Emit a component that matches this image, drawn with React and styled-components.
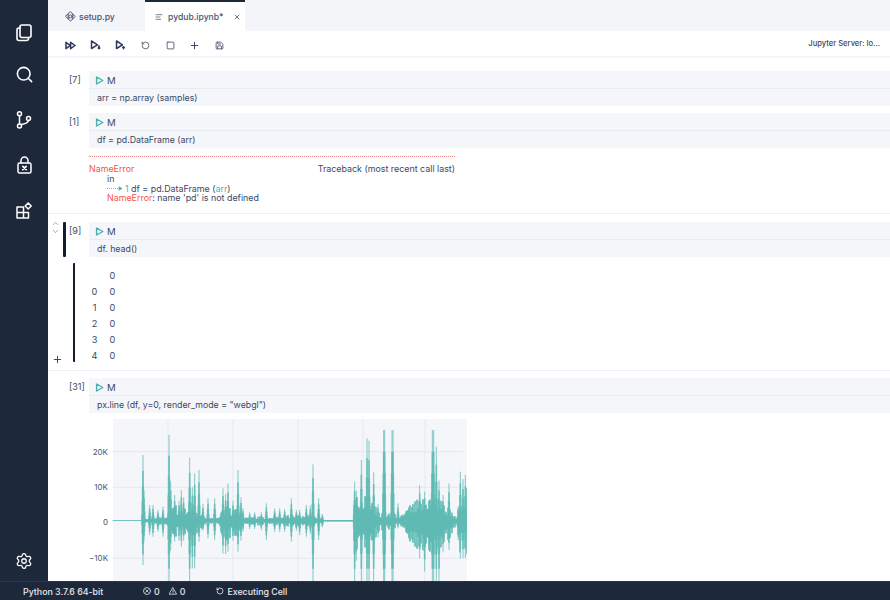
import React from "react";
import styled, { createGlobalStyle } from "styled-components";
import { Search, ChevronUp, ChevronDown, Plus, X, RotateCcw, Square, Save, Settings, AlignLeft } from "lucide-react";

const Global = createGlobalStyle`
  html, body { margin: 0; height: 100%; overflow: hidden; }
  #root { height: 100%; }
  * { box-sizing: border-box; }
`;
const Shell = styled.div`
  width: 890px; height: 600px; display: grid;
  grid-template-columns: 48px 1fr; grid-template-rows: 581px 19px;
  font-family: Inter, "Liberation Sans", sans-serif; font-size: 9px; color: #3d4763; background: #fff;
`;
const Side = styled.nav`
  background: #1e283b; display: flex; flex-direction: column; align-items: center;
  padding: 22px 0 10px; gap: 24px; color: #fff;
`;
const SideIcon = styled.span`
  height: 21px; display: flex; align-items: center; justify-content: center;
  margin-top: ${p => p.$bottom ? "auto" : `${p.$mt || 0}px`};
`;
const Main = styled.main`display: flex; flex-direction: column; overflow: hidden; min-width: 0;`;
const Tabs = styled.div`height: 31px; flex: none; background: #f3f5f9; display: flex;`;
const Tab = styled.div`
  width: ${p => p.$w}px; display: flex; align-items: center; gap: ${p => p.$gap}px; padding-left: ${p => p.$pad}px;
  padding-top: ${p => p.$active ? 0 : 2}px;
  background: ${p => p.$active ? "#fff" : "transparent"};
  border-top: ${p => p.$active ? "2px solid #1e283b" : "0"};
  color: #4a5470; font-weight: 500; font-size: 8.6px; white-space: nowrap;
  svg { flex: none; }
`;
const TabClose = styled.span`margin-left: 4px; display: flex; color: #3d4763;`;
const Tools = styled.div`height: 27px; flex: none; display: flex; padding-bottom: 2px; background: #f4f6fa;`;
const ToolInner = styled.div`
  flex: 1; height: 25px; padding: 3px 0 0 10px; background: #fff; display: flex; align-items: center;
`;
const Tool = styled.span`width: 24.9px; display: flex; justify-content: center; color: #2f3a58;`;
const Server = styled.span`margin: -3px 10px 0 auto; font-size: 7.6px; color: #3c4562; font-weight: 500;`;
const Book = styled.div`padding-top: 13px; display: flex; flex-direction: column;`;
const Row = styled.div`display: flex; margin-top: ${p => p.$mt || 0}px;`;
const Gutter = styled.div`width: 41px; flex: none; position: relative; padding: 1px 0 0 21px; height: 35px; font-size: 9px; line-height: 15px;`;
const Chev = styled.div`position: absolute; left: 3px; top: -3px; display: flex; flex-direction: column; color: #5f6880;`;
const ActiveBar = styled.div`position: absolute; left: 15px; top: 0; width: 2.5px; height: 35px; background: #141d2e; border-radius: 1px;`;
const Cell = styled.div`flex: 1; background: #f4f6fa; height: 35px; display: flex; flex-direction: column;`;
const CellHead = styled.div`height: 18px; flex: none; display: flex; align-items: center; gap: 3px; padding: 1px 0 0 6px; border-bottom: 1px solid #e8ebf1; font-size: 9.6px;`;
const Code = styled.div`flex: 1; padding-left: 8px; display: flex; align-items: center; font-size: 8.8px;`;
const ErrorBox = styled.div`
  margin-left: 41px; width: 366px; padding-top: 8px; height: 65px; font-size: 8.9px; line-height: 9.6px;
`;
const Dashed = styled.div`border-top: 1px dotted #f08a84; height: 8px;`;
const ErrHead = styled.div`display: flex; justify-content: space-between; line-height: 10px;`;
const ErrLine = styled.div`padding-left: 18px; display: flex; align-items: center; white-space: pre;`;
const Red = styled.span`color: #f4544c;`;
const Teal = styled.span`color: #4fb3ad;`;
const Sep = styled.div`height: 1px; background: #eceef3; margin-top: ${p => p.$mt}px;`;
const Output = styled.div`position: relative; height: 99px; margin: 6px 0 0 24.5px; border-left: 2.5px solid #141d2e; border-radius: 1px;`;
const Grid = styled.div`
  display: grid; grid-template-columns: 18px 18px; grid-auto-rows: 16.1px; padding: 5px 0 0 11px; font-size: 9.2px; line-height: 16px; text-align: center; width: 70px;
`;
const AddBtn = styled.span`position: absolute; left: -23px; bottom: -3px; display: flex; color: #2f3a58;`;
const Chart = styled.svg`display: block; margin-left: 41px; margin-top: 6px; flex: none;`;
const Status = styled.footer`
  grid-column: 1 / 3; background: #1e283b; color: #e6e9f0; display: flex; align-items: center; font-weight: 500; font-size: 8.8px; padding-left: 23px; border-top: 1px solid #2b3549;
`;
const StatusPy = styled.span`width: 120px;`;
const StatusItem = styled.span`display: inline-flex; align-items: center; gap: 3px; margin-right: ${p => p.$mr}px;`;

const stroke = { fill: "none", stroke: "currentColor", strokeLinecap: "round", strokeLinejoin: "round" };

const Files = () => (
  <svg width="16" height="18" viewBox="0 0 16 18" {...stroke} strokeWidth="1.6">
    <rect x="4" y="1" width="11" height="12.5" rx="2" />
    <path d="M4 4H3a2 2 0 0 0-2 2v8.5a2 2 0 0 0 2 2h7.5a2 2 0 0 0 2-2v-1" />
  </svg>
);
const Branch = () => (
  <svg width="16" height="18" viewBox="0 0 16 18" {...stroke} strokeWidth="1.5">
    <circle cx="3.5" cy="2.8" r="2" /><circle cx="3.5" cy="15" r="2" /><circle cx="12.5" cy="7.5" r="2" />
    <path d="M3.5 5v8M5.3 13.6C9 13 12 12 12.5 9.6" />
  </svg>
);
const LockX = () => (
  <svg width="15" height="18" viewBox="0 0 15 18" {...stroke} strokeWidth="1.5">
    <rect x="1" y="7" width="13" height="10" rx="1.6" />
    <path d="M4 7V4.5a3.5 3.5 0 0 1 7 0V7" />
    <path d="M5.8 10.3l3.4 3.4M9.2 10.3l-3.4 3.4" strokeWidth="1.7" />
  </svg>
);
const Extensions = () => (
  <svg width="16" height="17" viewBox="0 0 16 17" {...stroke} strokeWidth="1.5">
    <path d="M1 5h6.5v11H1zM1 10.5h11.5V16H7.5" />
    <path d="M12.2 1l3 3-3 3-3-3z" />
  </svg>
);
const PlayMark = ({ c = "#47b1ab", s = 9 }) => (
  <svg width={s} height={s} viewBox="0 0 9 9" fill="none" stroke={c} strokeWidth="1.4" strokeLinejoin="round"><path d="M1.6 1v7L7.8 4.5z" /></svg>
);
const RunAll = () => (
  <svg width="11" height="9" viewBox="0 0 11 9" {...stroke} strokeWidth="1.5"><path d="M1 1.3v6.4L5.3 4.5zM5.6 1.3v6.4L10 4.5z" /></svg>
);
const RunDown = ({ flip }) => (
  <svg width="11" height="10" viewBox="0 0 11 10" {...stroke} strokeWidth="1.5">
    <path d="M1.5 1v7.5L7.5 4.8z" />
    <path d={flip ? "M8.5 8.8v-2M7.7 7.5l.8-.8.8.8" : "M9 5.8v3M8.2 8l.8.8.8-.8"} />
  </svg>
);
const PySymbol = () => (
  <svg width="11" height="11" viewBox="0 0 11 11" {...stroke} strokeWidth="1">
    <path d="M5.5.8L10.2 5.5 5.5 10.2.8 5.5z" /><circle cx="5.5" cy="5.5" r="1.6" /><path d="M3.2 3.2v4.6M7.8 3.2v4.6" />
  </svg>
);
const Arrow = () => (
  <svg width="17" height="5" viewBox="0 0 17 5" fill="none" stroke="#4fb3ad" strokeWidth=".8" style={{ marginRight: 1 }}>
    <path d="M0 2.5h14" strokeDasharray="1 1" /><path d="M12 .8l3 1.7-3 1.7z" fill="#4fb3ad" />
  </svg>
);
const CircleX = () => (
  <svg width="8" height="8" viewBox="0 0 8 8" {...stroke} strokeWidth=".8"><circle cx="4" cy="4" r="3.5" /><path d="M2.7 2.7l2.6 2.6M5.3 2.7L2.7 5.3" /></svg>
);
const Warn = () => (
  <svg width="8" height="8" viewBox="0 0 8 8" {...stroke} strokeWidth=".8"><path d="M4 .8L7.6 7.2H.4z" /><path d="M4 3v2M4 6v.1" /></svg>
);

// thin peaks: [x, up, down] in units of 1/3 px
const spikes = [
  [190,197,133],[193,90,60],[210,47,43],[220,47,48],[235,32,33],[250,42,48],
  [268,257,190],[273,120,90],[285,77,63],[298,60,60],[305,92,78],[312,70,60],[330,189,190],[338,100,143],[345,142,143],
  [358,152,63],[370,50,30],[385,67,53],[405,67,58],[430,97,98],[438,80,100],[445,112,93],[460,60,60],[475,152,93],[484,70,60],[490,37,33],
  [510,25,25],[525,25,25],[545,25,28],[560,52,58],[585,37,33],[600,37,33],[615,35,33],[635,67,63],[650,32,30],[660,32,43],[680,47,48],[692,45,40],[700,169,190],[717,67,58],[728,20,20],
  [825,117,190],[830,90,120],[845,182,190],[862,247,190],[868,240,190],[882,145,190],[895,50,50],[912,272,190],[915,272,190],[937,272,190],[940,272,190],[955,52,23],
  [1020,107,113],[1035,87,153],[1058,272,190],[1062,272,190],[1070,222,190],[1078,120,190],[1090,77,93],[1108,112,88],[1142,147,113],[1150,125,113],[1157,137,113],
];
// broad body of the sound between the peaks: [x, up, down]
const body = [
  [100,1,1],[196,1,1],[200,8,8],[260,14,18],[275,48,50],[310,38,38],[340,28,48],[380,10,10],[415,8,8],[430,42,62],[470,32,42],[495,11,11],[520,10,12],[700,18,18],[725,7,7],[738,2,2],[820,2,2],
  [822,80,100],[860,75,80],[900,22,30],[950,18,20],[960,7,7],[975,32,36],[990,46,62],[1020,60,80],[1050,85,125],[1080,68,90],[1110,32,50],[1130,8,12],[1140,68,90],[1162,88,90],
];
const bodyAt = (zx, key) => {
  for (let i = 1; i < body.length; i++) {
    if (zx <= body[i][0]) {
      const a = body[i - 1], b = body[i];
      return a[key] + (b[key] - a[key]) * (zx - a[0]) / (b[0] - a[0]);
    }
  }
  return 1;
};
const rand = n => {
  const v = Math.sin(n * 12.9898) * 43758.5453;
  return v - Math.floor(v);
};
const envelope = (zx, key) => {
  let best = bodyAt(zx, key);
  if (best > 2) best *= 0.4 + 0.75 * rand(Math.floor(zx / 3)) ** 2;
  for (const s of spikes) {
    const d = Math.abs(zx - s[0]);
    const v = s[key] * Math.max(0, 1 - d / 4.5) ** 1.1;
    if (v > best) best = v;
  }
  return best;
};
const wave = (() => {
  let d = "";
  for (let zx = 100; zx <= 1162; zx += 1) {
    const x = ((zx - 100) / 3).toFixed(2);
    const hi = envelope(zx, 1) / 3;
    const lo = envelope(zx, 2) / 3;
    d += `M${x} ${(101.7 - hi).toFixed(2)}V${(101.7 + lo).toFixed(2)}`;
  }
  return d;
})();

const Plot = () => (
  <Chart width="378" height="175" viewBox="-24 0 378 175">
    <rect x="0" y="0" width="354" height="175" fill="#f4f6fa" />
    <g stroke="#e6e9ef" strokeWidth="1">
      {[55, 120, 185, 250, 312].map(x => <line key={x} x1={x} x2={x} y1="0" y2="175" />)}
      {[32.7, 68.3, 139.3].map(y => <line key={y} x1="0" x2="350" y1={y} y2={y} />)}
    </g>
    <path d={wave} stroke="#5cb8b2" strokeWidth=".75" fill="none" />
    <g fontFamily="Inter, 'Liberation Sans', sans-serif" fontSize="8" fill="#4a5470" textAnchor="end">
      <text x="-5" y="35.5">20K</text>
      <text x="-5" y="71">10K</text>
      <text x="-5" y="106">0</text>
      <text x="-5" y="142">−10K</text>
    </g>
  </Chart>
);

const NbCell = ({ n, code, active, mt }) => (
  <Row $mt={mt}>
    <Gutter>
      {active && <Chev><ChevronUp size={9} strokeWidth={1.5} /><ChevronDown size={9} strokeWidth={1.5} style={{ marginTop: -1 }} /></Chev>}
      {active && <ActiveBar />}
      [{n}]
    </Gutter>
    <Cell>
      <CellHead><PlayMark /> M</CellHead>
      <Code>{code}</Code>
    </Cell>
  </Row>
);

export default function App() {
  return (
    <Shell>
      <Global />
      <Side>
        <SideIcon><Files /></SideIcon>
        <SideIcon $mt={-3}><Search size={19} strokeWidth={2} /></SideIcon>
        <SideIcon><Branch /></SideIcon>
        <SideIcon><LockX /></SideIcon>
        <SideIcon $mt={1}><Extensions /></SideIcon>
        <SideIcon $bottom><Settings size={18} strokeWidth={1.7} /></SideIcon>
      </Side>
      <Main>
        <Tabs>
          <Tab $w={97} $pad={17} $gap={3}><PySymbol />setup.py</Tab>
          <Tab $active $w={100} $pad={10} $gap={5}>
            <AlignLeft size={8} strokeWidth={2.2} />pydub.ipynb*
            <TabClose><X size={8} strokeWidth={2.2} /></TabClose>
          </Tab>
        </Tabs>
        <Tools>
          <ToolInner>
            <Tool><RunAll /></Tool>
            <Tool><RunDown /></Tool>
            <Tool><RunDown flip /></Tool>
            <Tool><RotateCcw size={9} strokeWidth={1.9} /></Tool>
            <Tool><Square size={9} strokeWidth={2} /></Tool>
            <Tool><Plus size={11} strokeWidth={2} /></Tool>
            <Tool><Save size={9} strokeWidth={2} /></Tool>
            <Server>Jupyter Server: lo...</Server>
          </ToolInner>
        </Tools>
        <Book>
          <NbCell n="7" code="arr = np.array (samples)" />
          <NbCell n="1" code="df = pd.DataFrame (arr)" mt={7} />
          <ErrorBox>
            <Dashed />
            <ErrHead><Red>NameError</Red><span>Traceback (most recent call last)</span></ErrHead>
            <ErrLine>in</ErrLine>
            <ErrLine><Arrow /><Teal>1</Teal> df = pd.DataFrame (<Teal>arr</Teal>)</ErrLine>
            <ErrLine><Red>NameError</Red>: name 'pd' is not defined</ErrLine>
          </ErrorBox>
          <Sep $mt={0} />
          <NbCell n="9" code="df. head()" active mt={8} />
          <Output>
            <Grid>
              <span /><span>0</span>
              <span>0</span><span>0</span>
              <span>1</span><span>0</span>
              <span>2</span><span>0</span>
              <span>3</span><span>0</span>
              <span>4</span><span>0</span>
            </Grid>
            <AddBtn><Plus size={11} strokeWidth={2} /></AddBtn>
          </Output>
          <Sep $mt={8} />
          <NbCell n="31" code={'px.line (df, y=0, render_mode = "webgl")'} mt={7} />
          <Plot />
        </Book>
      </Main>
      <Status>
        <StatusPy>Python 3.7.6 64-bit</StatusPy>
        <StatusItem $mr={9}><CircleX /> 0</StatusItem>
        <StatusItem $mr={31}><Warn /> 0</StatusItem>
        <StatusItem $mr={0}><RotateCcw size={8} strokeWidth={2.4} /> Executing Cell</StatusItem>
      </Status>
    </Shell>
  );
}
